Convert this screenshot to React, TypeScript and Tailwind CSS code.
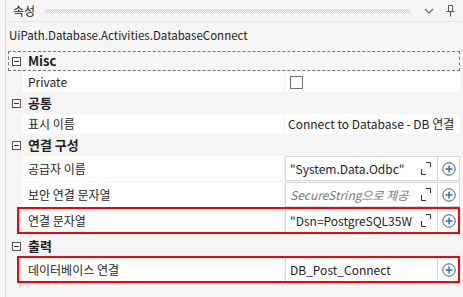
import React from 'react'

const font = "font-['Noto_Sans_CJK_KR','Noto_Sans',sans-serif]"

function Toggle() {
  return (
    <span className="flex h-[9px] w-[9px] items-center justify-center border border-[#555] bg-white">
      <span className="h-px w-[5px] bg-[#333]" />
    </span>
  )
}

function Category({ label, focused }: { label: string; focused?: boolean }) {
  return (
    <div
      className={
        'flex h-[20px] items-center gap-[7px] bg-[#f5f5f5] pl-[4px] ' +
        (focused ? 'outline-1 outline-dashed outline-[#777] -outline-offset-1' : '')
      }
    >
      <Toggle />
      <span className="text-[13px] font-semibold text-[#1e1e1e]">{label}</span>
    </div>
  )
}

function ExpandIcon() {
  return (
    <svg width="10" height="13" viewBox="0 0 10 13" className="shrink-0">
      <path d="M0.5 7v5.5H5" fill="none" stroke="#333" strokeWidth="1" />
      <path d="M5 0.5h4.5V5" fill="none" stroke="#333" strokeWidth="1" />
    </svg>
  )
}

function PlusIcon() {
  return (
    <svg width="14" height="14" viewBox="0 0 14 14">
      <circle cx="7" cy="7" r="6.2" fill="white" stroke="#555" strokeWidth="1" />
      <path d="M7 3.5v7M3.5 7h7" stroke="#1a6fd6" strokeWidth="1.4" />
    </svg>
  )
}

function Row({
  label,
  children,
  tall,
  marked,
}: {
  label: string
  children?: React.ReactNode
  tall?: boolean
  marked?: boolean
}) {
  return (
    <div className={'relative flex ' + (tall ? 'h-[25px]' : 'h-[20px]')}>
      <div className="w-[14px] shrink-0 bg-[#f5f5f5]" />
      <div className="flex w-[262px] shrink-0 items-center bg-white pl-[6px] text-[12px] text-[#1e1e1e]">
        {label}
      </div>
      <div className="w-px shrink-0 bg-[#f0f0f0]" />
      <div className="flex min-w-0 flex-1 items-stretch bg-white">{children}</div>
      {marked && (
        <div className="pointer-events-none absolute -top-px -bottom-px left-[9px] right-0 border-2 border-[#f00]" />
      )}
    </div>
  )
}

function Expr({
  text,
  placeholder,
  expand = true,
}: {
  text: string
  placeholder?: boolean
  expand?: boolean
}) {
  return (
    <div className="flex flex-1">
      <div className="flex min-w-0 flex-1 items-center border border-[#d9d9d9] pr-[6px] pl-[4px]">
        <span
          className={
            'flex-1 overflow-hidden whitespace-nowrap text-[12px] ' +
            (placeholder ? 'italic text-[#7a7a7a]' : 'text-[#1e1e1e]')
          }
        >
          {text}
        </span>
        {expand && <ExpandIcon />}
      </div>
      <div className="flex w-[22px] shrink-0 items-center justify-center border-y border-r border-[#d9d9d9]">
        <PlusIcon />
      </div>
    </div>
  )
}

export default function App() {
  return (
    <div className={'flex h-[297px] w-[463px] overflow-hidden bg-[#f5f5f5] ' + font}>
      <div className="w-[6px] shrink-0 border-r border-[#dadada] bg-[#f7f7f7]" />
      <div className="flex min-w-0 flex-1 flex-col">
        <div className="flex h-[22px] shrink-0 items-center border-b border-[#e3e3e3] pl-[7px] pr-[8px]">
          <span className="text-[12px] text-[#1e1e1e]">속성</span>
          <div className="mx-[10px] h-[4px] flex-1 bg-[repeating-conic-gradient(#cfcfcf_0_25%,transparent_0_50%)] [background-size:2px_2px]" />
          <svg width="10" height="6" viewBox="0 0 10 6" className="mx-[4px]">
            <path d="M1 1l4 4 4-4" fill="none" stroke="#666" strokeWidth="1.2" />
          </svg>
          <svg width="9" height="12" viewBox="0 0 9 12" className="ml-[8px]">
            <path d="M2.5 0.5h4v6h-4zM0.5 6.5h8M4.5 6.5v5" fill="none" stroke="#555" strokeWidth="1" />
          </svg>
        </div>
        <div className="flex h-[27px] shrink-0 items-center pl-[3px] text-[11.5px] text-[#1e1e1e]">
          UiPath.Database.Activities.DatabaseConnect
        </div>
        <div className="mt-[2px] mr-[3px] ml-[2px] flex flex-col gap-px">
          <Category label="Misc" focused />
          <Row label="Private">
            <div className="flex items-center pl-[5px]">
              <span className="h-[13px] w-[13px] border border-[#707070] bg-white" />
            </div>
          </Row>
          <Category label="공통" />
          <Row label="표시 이름">
            <div className="flex items-center overflow-hidden whitespace-nowrap pl-[3px] text-[12px] text-[#1e1e1e]">
              Connect to Database - DB 연결
            </div>
          </Row>
          <Category label="연결 구성" />
          <Row label="공급자 이름" tall>
            <Expr text={'"System.Data.Odbc"'} />
          </Row>
          <Row label="보안 연결 문자열" tall>
            <Expr text="SecureString으로 제공" placeholder />
          </Row>
          <Row label="연결 문자열" tall marked>
            <Expr text={'"Dsn=PostgreSQL35W'} />
          </Row>
          <div className="h-px" />
          <Category label="출력" />
          <Row label="데이터베이스 연결" tall marked>
            <Expr text="DB_Post_Connect" expand={false} />
          </Row>
        </div>
      </div>
    </div>
  )
}
